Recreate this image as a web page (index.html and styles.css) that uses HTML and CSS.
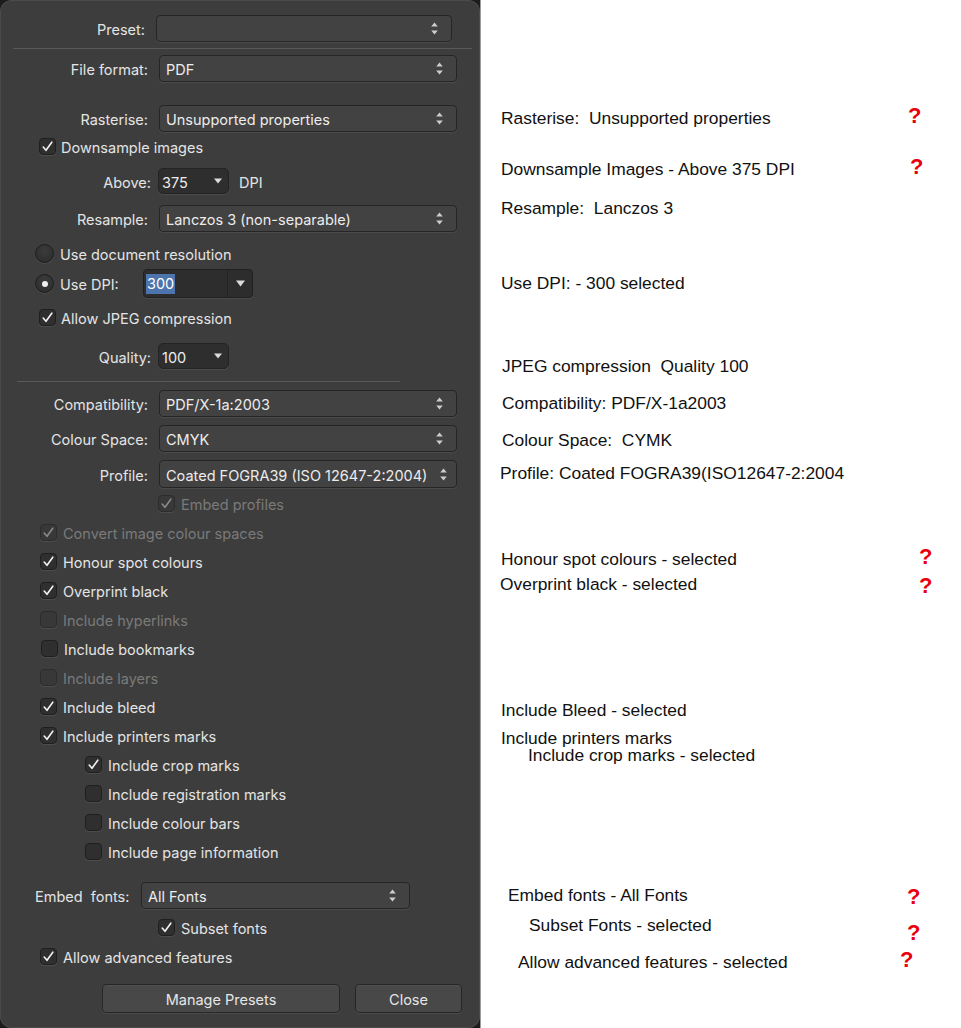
FILE: index.html
```html
<!DOCTYPE html>
<html lang="en">
<head>
<meta charset="utf-8">
<title>PDF export settings</title>
<link rel="stylesheet" href="styles.css">
</head>
<body>
<div class="page">
  <div class="dialog-back">
    <div class="dialog">
      <div class="row field">
        <span class="lbl lbl-preset">Preset:</span>
        <div class="select sel-preset"><span></span>
          <svg class="ud" width="7" height="13" viewBox="0 0 7 13"><path d="M3.5 0.5 L6.8 4.5 H0.2 Z M0.2 8.5 H6.8 L3.5 12.5 Z"/></svg>
        </div>
      </div>
      <div class="sep sep-top"></div>
      <div class="row field">
        <span class="lbl lbl-std">File format:</span>
        <div class="select sel-std"><span>PDF</span>
          <svg class="ud" width="7" height="13" viewBox="0 0 7 13"><path d="M3.5 0.5 L6.8 4.5 H0.2 Z M0.2 8.5 H6.8 L3.5 12.5 Z"/></svg>
        </div>
      </div>
      <div class="row field mt-rasterise">
        <span class="lbl lbl-std">Rasterise:</span>
        <div class="select sel-std"><span>Unsupported properties</span>
          <svg class="ud" width="7" height="13" viewBox="0 0 7 13"><path d="M3.5 0.5 L6.8 4.5 H0.2 Z M0.2 8.5 H6.8 L3.5 12.5 Z"/></svg>
        </div>
      </div>
      <div class="check ck-downsample">
        <span class="box"><svg width="13" height="13" viewBox="0 0 13 13"><path d="M2.2 7 L5 10.3 L10.8 2.2"/></svg></span>
        <span class="txt">Downsample images</span>
      </div>
      <div class="row mini-row mt-above">
        <span class="lbl lbl-mini">Above:</span>
        <div class="mini"><span>375</span><svg width="8" height="6" viewBox="0 0 8 6"><path d="M0 0.5H8L4 5.5Z"/></svg></div>
        <span class="unit">DPI</span>
      </div>
      <div class="row field mt-resample">
        <span class="lbl lbl-std">Resample:</span>
        <div class="select sel-std"><span>Lanczos 3 (non-separable)</span>
          <svg class="ud" width="7" height="13" viewBox="0 0 7 13"><path d="M3.5 0.5 L6.8 4.5 H0.2 Z M0.2 8.5 H6.8 L3.5 12.5 Z"/></svg>
        </div>
      </div>
      <div class="radio-row mt-docres">
        <span class="radio"></span>
        <span class="txt">Use document resolution</span>
      </div>
      <div class="radio-row dpi-row">
        <span class="radio on"><span class="dot"></span></span>
        <span class="txt dpi-lbl">Use DPI:</span>
        <div class="combo">
          <div class="val"><span class="hl">300</span></div>
          <div class="arr"><svg width="9" height="7" viewBox="0 0 9 7"><path d="M0 0.5H9L4.5 6.5Z"/></svg></div>
        </div>
      </div>
      <div class="check ck-jpeg">
        <span class="box"><svg width="13" height="13" viewBox="0 0 13 13"><path d="M2.2 7 L5 10.3 L10.8 2.2"/></svg></span>
        <span class="txt">Allow JPEG compression</span>
      </div>
      <div class="row mini-row mt-quality">
        <span class="lbl lbl-mini">Quality:</span>
        <div class="mini"><span>100</span><svg width="8" height="6" viewBox="0 0 8 6"><path d="M0 0.5H8L4 5.5Z"/></svg></div>
      </div>
      <div class="sep sep-mid"></div>
      <div class="row field">
        <span class="lbl lbl-std">Compatibility:</span>
        <div class="select sel-std"><span>PDF/X-1a:2003</span>
          <svg class="ud" width="7" height="13" viewBox="0 0 7 13"><path d="M3.5 0.5 L6.8 4.5 H0.2 Z M0.2 8.5 H6.8 L3.5 12.5 Z"/></svg>
        </div>
      </div>
      <div class="row field mt-8">
        <span class="lbl lbl-std">Colour Space:</span>
        <div class="select sel-std"><span>CMYK</span>
          <svg class="ud" width="7" height="13" viewBox="0 0 7 13"><path d="M3.5 0.5 L6.8 4.5 H0.2 Z M0.2 8.5 H6.8 L3.5 12.5 Z"/></svg>
        </div>
      </div>
      <div class="row field tall mt-8">
        <span class="lbl lbl-std">Profile:</span>
        <div class="select sel-std sel-profile"><span>Coated FOGRA39 (ISO 12647-2:2004)</span>
          <svg class="ud" width="7" height="13" viewBox="0 0 7 13"><path d="M3.5 0.5 L6.8 4.5 H0.2 Z M0.2 8.5 H6.8 L3.5 12.5 Z"/></svg>
        </div>
      </div>
      <div class="check dis ck-embedprof">
        <span class="box"><svg width="13" height="13" viewBox="0 0 13 13"><path d="M2.2 7 L5 10.3 L10.8 2.2"/></svg></span>
        <span class="txt">Embed profiles</span>
      </div>
      <div class="check dis">
        <span class="box"><svg width="13" height="13" viewBox="0 0 13 13"><path d="M2.2 7 L5 10.3 L10.8 2.2"/></svg></span>
        <span class="txt">Convert image colour spaces</span>
      </div>
      <div class="check">
        <span class="box"><svg width="13" height="13" viewBox="0 0 13 13"><path d="M2.2 7 L5 10.3 L10.8 2.2"/></svg></span>
        <span class="txt">Honour spot colours</span>
      </div>
      <div class="check">
        <span class="box"><svg width="13" height="13" viewBox="0 0 13 13"><path d="M2.2 7 L5 10.3 L10.8 2.2"/></svg></span>
        <span class="txt">Overprint black</span>
      </div>
      <div class="check dis">
        <span class="box"></span>
        <span class="txt">Include hyperlinks</span>
      </div>
      <div class="check ck-bookmarks">
        <span class="box"></span>
        <span class="txt">Include bookmarks</span>
      </div>
      <div class="check dis">
        <span class="box"></span>
        <span class="txt">Include layers</span>
      </div>
      <div class="check">
        <span class="box"><svg width="13" height="13" viewBox="0 0 13 13"><path d="M2.2 7 L5 10.3 L10.8 2.2"/></svg></span>
        <span class="txt">Include bleed</span>
      </div>
      <div class="check">
        <span class="box"><svg width="13" height="13" viewBox="0 0 13 13"><path d="M2.2 7 L5 10.3 L10.8 2.2"/></svg></span>
        <span class="txt">Include printers marks</span>
      </div>
      <div class="check sub">
        <span class="box"><svg width="13" height="13" viewBox="0 0 13 13"><path d="M2.2 7 L5 10.3 L10.8 2.2"/></svg></span>
        <span class="txt">Include crop marks</span>
      </div>
      <div class="check sub">
        <span class="box"></span>
        <span class="txt">Include registration marks</span>
      </div>
      <div class="check sub">
        <span class="box"></span>
        <span class="txt">Include colour bars</span>
      </div>
      <div class="check sub">
        <span class="box"></span>
        <span class="txt">Include page information</span>
      </div>
      <div class="row field embed-row">
        <span class="lbl-embed">Embed&nbsp; fonts:</span>
        <div class="select sel-embed"><span>All Fonts</span>
          <svg class="ud" width="7" height="13" viewBox="0 0 7 13"><path d="M3.5 0.5 L6.8 4.5 H0.2 Z M0.2 8.5 H6.8 L3.5 12.5 Z"/></svg>
        </div>
      </div>
      <div class="check ck-subset">
        <span class="box"><svg width="13" height="13" viewBox="0 0 13 13"><path d="M2.2 7 L5 10.3 L10.8 2.2"/></svg></span>
        <span class="txt">Subset fonts</span>
      </div>
      <div class="check">
        <span class="box"><svg width="13" height="13" viewBox="0 0 13 13"><path d="M2.2 7 L5 10.3 L10.8 2.2"/></svg></span>
        <span class="txt">Allow advanced features</span>
      </div>
      <div class="buttons">
        <button class="btn btn-manage" type="button">Manage Presets</button>
        <button class="btn btn-close" type="button">Close</button>
      </div>
    </div>
  </div>

  <div class="canvas">
    <p class="note n-ras">Rasterise:&nbsp; Unsupported properties</p>
    <span class="q q-ras">?</span>
    <p class="note n-down">Downsample Images - Above 375 DPI</p>
    <span class="q q-down">?</span>
    <p class="note n-res">Resample:&nbsp; Lanczos 3</p>
    <p class="note n-dpi">Use DPI: - 300 selected</p>
    <p class="note n-jpeg">JPEG compression&nbsp; Quality 100</p>
    <p class="note n-compat">Compatibility: PDF/X-1a2003</p>
    <p class="note n-cs">Colour Space:&nbsp; CYMK</p>
    <p class="note n-prof">Profile: Coated FOGRA39(ISO12647-2:2004</p>
    <p class="note n-honour">Honour spot colours - selected</p>
    <span class="q q-honour">?</span>
    <p class="note n-over">Overprint black - selected</p>
    <span class="q q-over">?</span>
    <p class="note n-bleed">Include Bleed - selected</p>
    <p class="note n-printers">Include printers marks</p>
    <p class="note n-crop">Include crop marks - selected</p>
    <p class="note n-embed">Embed fonts - All Fonts</p>
    <span class="q q-embed">?</span>
    <p class="note n-subset">Subset Fonts - selected</p>
    <span class="q q-subset">?</span>
    <p class="note n-allow">Allow advanced features - selected</p>
    <span class="q q-allow">?</span>
  </div>
</div>
</body>
</html>
```

FILE: styles.css
```css
* { box-sizing: border-box; }
html, body { margin: 0; padding: 0; }
body {
  width: 961px;
  height: 1028px;
  overflow: hidden;
  background: #ffffff;
  font-family: Inter, "Noto Sans", sans-serif;
}
.page { display: flex; height: 1028px; }

/* ---------- dialog ---------- */
.dialog-back {
  flex: none;
  width: 480px;
  height: 1028px;
  background: #1c1c1c;
}
.dialog {
  height: 1028px;
  background: #3d3d3d;
  border-radius: 12px;
  padding-top: 15px;
  color: #e4e4e4;
  font-size: 14.5px;
  box-shadow: inset 0 0 0 1px #4a4a4a;
}
.row { display: flex; align-items: center; }
.field { height: 27px; }
.field.tall { height: 28px; }
.lbl { flex: none; text-align: right; padding-top: 2px; }
.lbl-preset { width: 145px; margin-right: 11px; }
.lbl-std { width: 148px; margin-right: 11px; }
.lbl-mini { width: 151px; margin-right: 7px; }

.select {
  display: flex;
  align-items: center;
  justify-content: space-between;
  height: 100%;
  padding: 2px 13px 0 6px;
  background: #424242;
  border: 1px solid #252525;
  border-radius: 4px;
  box-shadow: 0 1px 0 rgba(255, 255, 255, 0.07);
  color: #ececec;
}
.select .ud { margin-top: -2px; }
.sel-preset { width: 296px; }
.sel-std { width: 298px; }
.sel-profile { padding-right: 9px; }
.sel-embed { width: 269px; }
.ud path { fill: #cdcdcd; }

.sep { height: 1px; background: #595959; }
.sep-top { margin: 6px 8px 6px 13px; }
.sep-mid { margin: 12px 80px 8px 17px; }

.mt-rasterise { margin-top: 23px; }
.mt-above { margin-top: 7px; }
.mt-resample { margin-top: 11px; }
.mt-docres { margin-top: 7px; }
.mt-quality { margin-top: 11px; }
.mt-8 { margin-top: 8px; }

.mini-row { height: 26px; }
.mini {
  display: flex;
  align-items: center;
  justify-content: space-between;
  width: 71px;
  height: 26px;
  padding: 3px 6px 0 3px;
  background: #2e2e2e;
  border: 1px solid #232323;
  border-radius: 5px;
  box-shadow: 0 1px 0 rgba(255, 255, 255, 0.07);
  color: #ececec;
}
.mini svg { margin-top: -3px; }
.mini svg path { fill: #dcdcdc; }
.unit { margin-left: 10px; padding-top: 2px; }

/* checkboxes */
.check {
  display: flex;
  align-items: center;
  height: 29px;
  padding-left: 40px;
  gap: 6px;
}
.txt { padding-top: 2px; }
.box {
  flex: none;
  display: flex;
  align-items: center;
  justify-content: center;
  width: 17px;
  height: 17px;
  background: #2f2f2f;
  border: 1px solid #1f1f1f;
  border-radius: 4px;
  box-shadow: 0 1px 0 rgba(255, 255, 255, 0.08);
}
.box path { fill: none; stroke: #f2f2f2; stroke-width: 1.6; stroke-linecap: round; stroke-linejoin: round; }
.check.dis { color: #7a7a7a; }
.check.dis .box { background: #383838; border-color: #2c2c2c; }
.check.dis .box path { stroke: #8a8a8a; }
.ck-downsample { padding-left: 39px; gap: 5px; }
.ck-jpeg { margin-top: 5px; padding-left: 39px; gap: 5px; }
.ck-embedprof { margin-top: 1px; padding-left: 158px; }
.ck-bookmarks { padding-left: 41px; }
.check.sub { padding-left: 85px; }
.ck-subset { margin-top: 4px; padding-left: 158px; }

/* radios */
.radio-row {
  display: flex;
  align-items: center;
  height: 29px;
  padding-left: 35px;
  gap: 6px;
}
.radio {
  flex: none;
  display: flex;
  align-items: center;
  justify-content: center;
  width: 19px;
  height: 19px;
  border-radius: 50%;
  background: radial-gradient(circle at 50% 35%, #3b3b3b, #2b2b2b);
  border: 1px solid #1e1e1e;
  box-shadow: 0 1px 0 rgba(255, 255, 255, 0.08);
}
.radio .dot { width: 6px; height: 6px; border-radius: 50%; background: #f0f0f0; }
.dpi-row { margin-top: 1px; }
.dpi-lbl { width: 77px; flex: none; }
.combo {
  display: flex;
  width: 110px;
  height: 29px;
  background: #2d2d2d;
  border: 1px solid #202020;
  border-radius: 4px;
  box-shadow: 0 1px 0 rgba(255, 255, 255, 0.07);
}
.combo .val { flex: 1; display: flex; align-items: center; padding-left: 2px; }
.hl { background: #4d74ad; color: #ffffff; padding: 1px 1px; line-height: 18px; }
.combo .arr {
  width: 25px;
  display: flex;
  align-items: center;
  justify-content: center;
  border-left: 1px solid #232323;
}
.combo .arr path { fill: #dcdcdc; }

/* embed fonts */
.embed-row { margin-top: 16px; padding-left: 35px; }
.lbl-embed { flex: none; width: 106px; padding-top: 2px; }

/* buttons */
.buttons {
  display: flex;
  gap: 15px;
  margin-top: 13px;
  padding-left: 102px;
}
.btn {
  height: 29px;
  padding-top: 2px;
  font-family: inherit;
  font-size: 14.5px;
  color: #e6e6e6;
  background: #484848;
  border: 1px solid #262626;
  border-radius: 4px;
  box-shadow: 0 1px 0 rgba(255, 255, 255, 0.07), inset 0 1px 0 rgba(255, 255, 255, 0.05);
}
.btn-manage { width: 238px; }
.btn-close { width: 107px; }

/* ---------- annotation canvas ---------- */
.canvas {
  position: relative;
  flex: 1;
  height: 1028px;
  border-left: 1px solid #9c9c9c;
  font-family: "Liberation Sans", Arial, sans-serif;
  color: #111111;
}
.note {
  position: absolute;
  margin: 0;
  font-size: 17.4px;
  line-height: 17px;
  white-space: nowrap;
}
.q {
  position: absolute;
  font-size: 22px;
  font-weight: bold;
  line-height: 26px;
  color: #e8000b;
}
.n-ras { left: 20px; top: 109.5px; }
.q-ras { left: 427px; top: 103px; }
.n-down { left: 20px; top: 160.5px; }
.q-down { left: 429px; top: 154px; }
.n-res { left: 20px; top: 199.5px; }
.n-dpi { left: 20px; top: 274.5px; }
.n-jpeg { left: 21px; top: 357.5px; }
.n-compat { left: 21px; top: 394.5px; }
.n-cs { left: 21px; top: 431.5px; }
.n-prof { left: 19px; top: 464.5px; }
.n-honour { left: 20px; top: 550.5px; }
.q-honour { left: 438px; top: 544px; }
.n-over { left: 19px; top: 575.5px; }
.q-over { left: 438px; top: 573px; }
.n-bleed { left: 20px; top: 701.5px; }
.n-printers { left: 20px; top: 729.5px; }
.n-crop { left: 47px; top: 746.5px; }
.n-embed { left: 27px; top: 886.5px; }
.q-embed { left: 426px; top: 884px; }
.n-subset { left: 48px; top: 916.5px; }
.q-subset { left: 426px; top: 920px; }
.n-allow { left: 37px; top: 953.5px; }
.q-allow { left: 419px; top: 947px; }
```
